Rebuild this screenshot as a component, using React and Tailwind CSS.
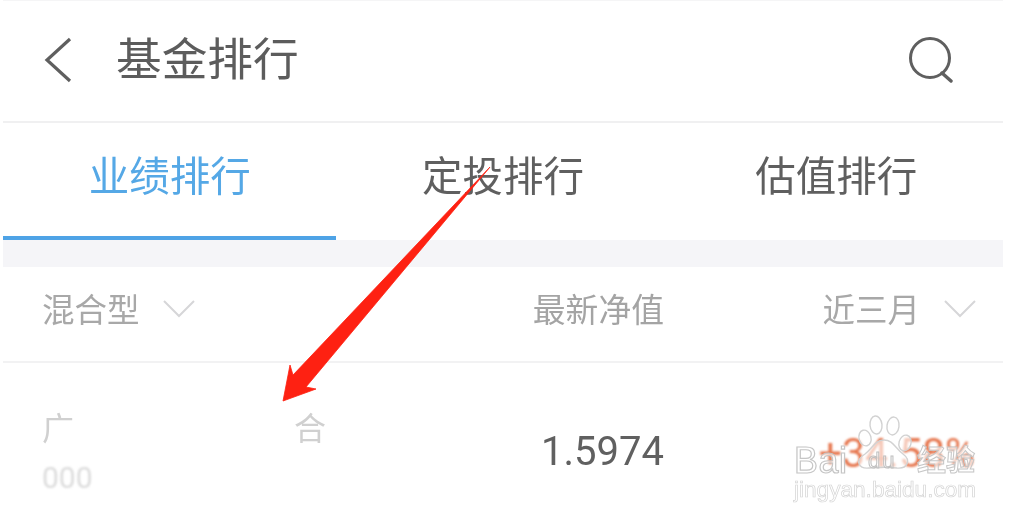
const cjk = { fontFamily: '"Noto Sans CJK SC", "Noto Sans", sans-serif' };

function Chevron() {
  return (
    <svg width="34" height="22" viewBox="0 0 34 22" fill="none" className="blur-[0.5px] mt-[1px]">
      <path d="M2 3 L17 18 L32 3" stroke="#d6d6d8" strokeWidth="2" />
    </svg>
  );
}

export default function App() {
  return (
    <div className="relative w-[1034px] h-[525px] overflow-hidden bg-white pl-[3px] pr-[31px]" style={cjk}>
      <div className="flex flex-col h-full">
        <header className="h-[123px] shrink-0 flex items-center border-t border-t-[#f5f5f6] border-b-2 border-b-[#f0f0f1] pl-[40px] pr-[47px]">
          <svg width="32" height="46" viewBox="0 0 32 46" fill="none" className="blur-[0.4px] mr-[41px] -mt-[3px]">
            <path d="M27 2 L4 23 L27 44" stroke="#5f5f5f" strokeWidth="3.2" />
          </svg>
          <h1 className="text-[45.7px] leading-none font-normal text-[#5c5c5c] blur-[0.5px] -mt-[8px]">基金排行</h1>
          <svg width="48" height="48" viewBox="0 0 48 48" fill="none" className="ml-auto blur-[0.4px] -mt-[1px]">
            <circle cx="22" cy="21" r="19.5" stroke="#5f5f5f" strokeWidth="3" />
            <path d="M34 36 L43 44" stroke="#5f5f5f" strokeWidth="3.4" strokeLinecap="round" />
          </svg>
        </header>

        <nav className="h-[117px] shrink-0 flex">
          <div className="flex-1 flex items-center justify-center border-b-4 border-b-[#4ea3e6] pb-[10px]">
            <span className="text-[40.5px] leading-none text-[#55a8e6] blur-[0.5px]">业绩排行</span>
          </div>
          <div className="flex-1 flex items-center justify-center pb-[14px]">
            <span className="text-[40.5px] leading-none text-[#5f5f5f] blur-[0.5px]">定投排行</span>
          </div>
          <div className="flex-1 flex items-center justify-center pb-[14px]">
            <span className="text-[40.5px] leading-none text-[#5f5f5f] blur-[0.5px]">估值排行</span>
          </div>
        </nav>

        <div className="h-[27px] shrink-0 bg-[#f5f5f8]"></div>

        <div className="h-[96px] shrink-0 flex items-center border-b-2 border-b-[#f2f2f3] pb-[11px]">
          <div className="flex-1 flex items-center pl-[39px]">
            <span className="text-[32.5px] leading-none text-[#a8a8a8] blur-[0.5px]">混合型</span>
            <span className="ml-[22px]"><Chevron /></span>
          </div>
          <span className="text-[32.8px] leading-none text-[#a4a4a4] blur-[0.5px]">最新净值</span>
          <div className="w-[339px] flex items-center justify-end pr-[26px]">
            <span className="text-[32.5px] leading-none text-[#a8a8a8] blur-[0.5px]">近三月</span>
            <span className="ml-[23px]"><Chevron /></span>
          </div>
        </div>

        <div className="flex-1 flex items-start">
          <div className="flex-1 pl-[39px] pt-[47px]">
            <div className="flex w-[284px] justify-between text-[32px] leading-none text-[#d0d0d0] blur-[0.7px]">
              <span>广</span>
              <span>合</span>
            </div>
            <div className="mt-[21px] text-[30px] leading-none text-[#dcdcdc] blur-[1px]" style={{ fontFamily: 'Roboto, sans-serif' }}>000</div>
          </div>
          <span className="mt-[69px] text-[40px] leading-none text-[#606060] blur-[0.4px]" style={{ fontFamily: 'Roboto, sans-serif' }}>1.5974</span>
          <div className="w-[339px] flex justify-end pr-[28px] pt-[70px]">
            <span className="text-[41px] leading-none text-[#e6764e] blur-[0.8px]" style={{ fontFamily: 'Roboto, sans-serif' }}>+34.58%</span>
          </div>
        </div>
      </div>

      {/* annotation arrow */}
      <svg className="absolute left-0 top-0 pointer-events-none" width="1034" height="525" viewBox="0 0 1034 525">
        <path d="M490 167 L293 375 L290 365 L283 401 L316 389 L306 387 Z" fill="#fe2112" stroke="#fe2112" strokeWidth="0.8" />
      </svg>

      {/* watermark */}
      <div className="absolute left-[793px] top-[415px] w-[190px] h-[90px] pointer-events-none blur-[0.3px]">
        <svg className="absolute left-0 top-0" width="190" height="60" viewBox="0 0 190 60" fill="#ffffff" fillOpacity="0.6" stroke="#d2d2d2" strokeWidth="1.4">
          <ellipse cx="83" cy="10" rx="6" ry="9" transform="rotate(-6 83 10)" />
          <ellipse cx="100" cy="11" rx="6" ry="9" transform="rotate(8 100 11)" />
          <ellipse cx="72" cy="23" rx="6" ry="8" transform="rotate(-15 72 23)" />
          <ellipse cx="112" cy="28" rx="6" ry="8" transform="rotate(15 112 28)" />
          <path d="M91 25 C82 25 80 33 72 39 C61 46 66 54 76 53 C86 52 96 52 104 53 C115 54 118 45 110 39 C102 33 100 25 91 25 Z" />
        </svg>
        <div
          className="absolute left-[1px] top-[28px] whitespace-nowrap text-[36px] leading-none text-white/60 [-webkit-text-stroke:1.2px_#c6c6c6] tracking-[0.5px]"
          style={{ fontFamily: '"Liberation Sans", sans-serif' }}
        >
          Bai
        </div>
        <div
          className="absolute left-[75px] top-[35px] whitespace-nowrap text-[22px] leading-none text-white/30 [-webkit-text-stroke:1px_#c0c0c0] tracking-[2px]"
          style={{ fontFamily: '"Liberation Sans", sans-serif' }}
        >
          du
        </div>
        <div className="absolute left-[124px] top-[29px] whitespace-nowrap text-[29px] leading-none font-bold text-white/60 [-webkit-text-stroke:1px_#c6c6c6]" style={cjk}>
          经验
        </div>
        <div
          className="absolute left-[1px] top-[64px] whitespace-nowrap text-[22.6px] leading-none text-white [-webkit-text-stroke:0.7px_#d4d4d4]"
          style={{ fontFamily: '"Liberation Sans", sans-serif' }}
        >
          jingyan.baidu.com
        </div>
      </div>
    </div>
  );
}
